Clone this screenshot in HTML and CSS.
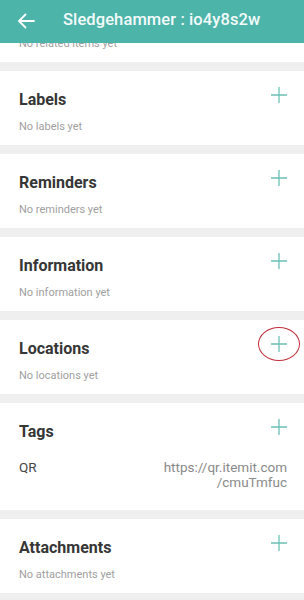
FILE: index.html
```html
<!DOCTYPE html>
<html>
<head>
<meta charset="utf-8">
<link rel="stylesheet" href="styles.css">
</head>
<body>
<header class="appbar">
  <svg class="back" width="18" height="16" viewBox="0 0 18 16"><path d="M17 8H2M8.5 1.5L2 8l6.5 6.5" fill="none" stroke="#fff" stroke-width="1.8" stroke-linecap="round" stroke-linejoin="round"/></svg>
  <h1 class="apptitle">Sledgehammer : io4y8s2w</h1>
</header>
<main class="content">
  <section class="card first">
    <p class="empty">No related items yet</p>
  </section>
  <section class="card">
    <div class="card-head"><h2 class="card-title">Labels</h2><span class="plus"><svg width="16" height="16" viewBox="0 0 16 16"><path d="M8 0v16M0 8h16" stroke="#6cc0b7" stroke-width="1.3"/></svg></span></div>
    <p class="empty">No labels yet</p>
  </section>
  <section class="card">
    <div class="card-head"><h2 class="card-title">Reminders</h2><span class="plus"><svg width="16" height="16" viewBox="0 0 16 16"><path d="M8 0v16M0 8h16" stroke="#6cc0b7" stroke-width="1.3"/></svg></span></div>
    <p class="empty">No reminders yet</p>
  </section>
  <section class="card">
    <div class="card-head"><h2 class="card-title">Information</h2><span class="plus"><svg width="16" height="16" viewBox="0 0 16 16"><path d="M8 0v16M0 8h16" stroke="#6cc0b7" stroke-width="1.3"/></svg></span></div>
    <p class="empty">No information yet</p>
  </section>
  <section class="card">
    <div class="card-head"><h2 class="card-title">Locations</h2><span class="plus"><svg width="16" height="16" viewBox="0 0 16 16"><path d="M8 0v16M0 8h16" stroke="#6cc0b7" stroke-width="1.3"/></svg><span class="ring"></span></span></div>
    <p class="empty">No locations yet</p>
  </section>
  <section class="card tags">
    <div class="card-head"><h2 class="card-title">Tags</h2><span class="plus"><svg width="16" height="16" viewBox="0 0 16 16"><path d="M8 0v16M0 8h16" stroke="#6cc0b7" stroke-width="1.3"/></svg></span></div>
    <div class="tag-row"><span class="tag-type">QR</span><span class="tag-value">https://qr.itemit.com<br>/cmuTmfuc</span></div>
  </section>
  <section class="card">
    <div class="card-head"><h2 class="card-title">Attachments</h2><span class="plus"><svg width="16" height="16" viewBox="0 0 16 16"><path d="M8 0v16M0 8h16" stroke="#6cc0b7" stroke-width="1.3"/></svg></span></div>
    <p class="empty">No attachments yet</p>
  </section>
</main>
</body>
</html>
```

FILE: styles.css
```css
* { box-sizing: border-box; }
html, body { margin: 0; padding: 0; }
body {
  background: #efefef;
  font-family: Roboto, "Liberation Sans", Arial, sans-serif;
  width: 304px;
  height: 600px;
  overflow: hidden;
}
.appbar {
  position: fixed;
  top: 0; left: 0; right: 0;
  height: 43px;
  background: #4db4aa;
  display: flex;
  align-items: center;
  padding-left: 17px;
  z-index: 2;
}
.back { flex: none; margin-top: -2px; }
.apptitle {
  margin: -3px 0 0 28px;
  color: #f4fbfa;
  font-size: 16.5px;
  font-weight: 500;
  line-height: 20px;
  letter-spacing: 0.1px;
}
.content {
  display: flex;
  flex-direction: column;
  gap: 9px;
}
.card {
  background: #fff;
  padding: 19px 17px 10px 19px;
  height: 74px;
}
.card.first { height: 62px; padding-top: 27px; }
.card.tags { height: 107px; }
.card-head {
  display: flex;
  justify-content: space-between;
  align-items: flex-start;
}
.card-title {
  margin: 0;
  font-size: 16px;
  line-height: 20px;
  font-weight: 700;
  color: #363636;
}
.plus {
  position: relative;
  display: block;
  width: 16px;
  height: 16px;
  margin-top: -3px;
}
.plus svg { display: block; }
.ring {
  position: absolute;
  left: -13px;
  top: -9px;
  width: 42px;
  height: 34px;
  border: 1.8px solid #c0303c;
  border-radius: 50%;
}
.empty {
  margin: 9px 0 0;
  font-size: 11px;
  line-height: 16px;
  color: #a0a0a0;
}
.tag-row {
  display: flex;
  justify-content: space-between;
  margin-top: 18px;
  font-size: 13.5px;
  line-height: 15px;
}
.tag-type { color: #454545; }
.tag-value { color: #8a8a8a; text-align: right; }
```
